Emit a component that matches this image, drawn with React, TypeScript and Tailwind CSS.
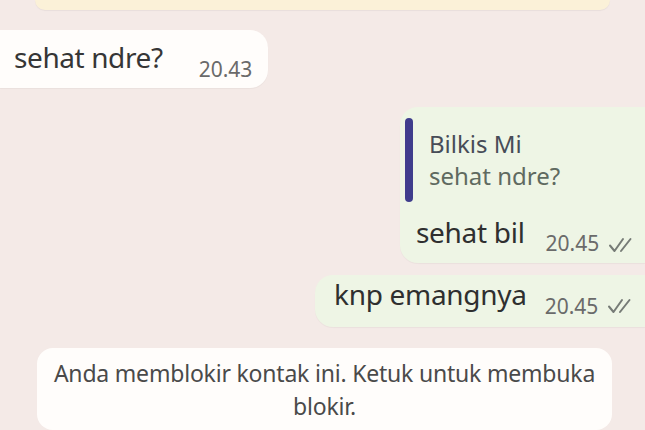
import React from "react";

const Ticks = () => (
  <svg width="29" height="16" viewBox="0 0 29 16" fill="none" stroke="#767b76" strokeWidth="2" strokeLinecap="round" strokeLinejoin="round">
    <path d="M2 8.5 L6.5 14 L15 2" />
    <path d="M13 14 L22.5 2" />
  </svg>
);

export default function App() {
  return (
    <div
      className="w-[645px] h-[430px] bg-[#f4eae7] overflow-hidden flex flex-col text-[#3b3b3b]"
      style={{ fontFamily: '"Noto Sans", "Open Sans", sans-serif' }}
    >
      <div className="ml-[35px] w-[575px] h-[10px] bg-[#fbf1d8] rounded-b-[14px] shrink-0 shadow-[0_1px_1px_rgba(0,0,0,0.05)]" />

      <div className="mt-[20px] w-[268px] h-[58px] bg-[#fffdfb] rounded-r-[18px] flex items-start shrink-0 shadow-[0_1px_1px_rgba(0,0,0,0.04)]">
        <span className="mt-[13px] ml-[14px] text-[28px] leading-none tracking-[-0.4px] text-[#363636]">sehat ndre?</span>
        <span className="mt-[29px] ml-[36px] text-[21px] leading-none text-[#6a6a6a]">20.43</span>
      </div>

      <div className="mt-[19px] self-end w-[245px] h-[156px] bg-[#eef5e5] rounded-l-[18px] shrink-0 flex flex-col shadow-[0_1px_1px_rgba(0,0,0,0.04)]">
        <div className="mt-[11px] ml-[5px] h-[84px] flex">
          <div className="w-[8px] h-full bg-[#3f3d8c] rounded-[4px]" />
          <div className="ml-[16px] flex flex-col pt-[14px]">
            <span className="text-[24px] leading-none text-[#474c57]">Bilkis Mi</span>
            <span className="mt-[8px] text-[24px] leading-none text-[#5f6a60]">sehat ndre?</span>
          </div>
        </div>
        <div className="flex items-start ml-[16px]">
          <span className="mt-[16px] text-[28px] leading-none text-[#2f2f2f] tracking-[-0.3px]">sehat bil</span>
          <span className="mt-[31px] ml-[21px] text-[21px] leading-none text-[#6a6a6a]">20.45</span>
          <span className="mt-[35px] ml-[9px]"><Ticks /></span>
        </div>
      </div>

      <div className="mt-[12px] self-end w-[330px] h-[52px] bg-[#eef5e5] rounded-l-[18px] shrink-0 flex items-start shadow-[0_1px_1px_rgba(0,0,0,0.04)]">
        <span className="mt-[5px] ml-[19px] text-[28px] leading-none text-[#2f2f2f] tracking-[-0.3px]">knp emangnya</span>
        <span className="mt-[21px] ml-[18px] text-[21px] leading-none text-[#6a6a6a]">20.45</span>
        <span className="mt-[23px] ml-[9px]"><Ticks /></span>
      </div>

      <div className="mt-[21px] ml-[37px] w-[575px] h-[82px] bg-[#fffdfb] rounded-[16px] shrink-0 flex flex-col items-center pt-[9px] text-[23px] leading-[33px] text-[#4a4a4a] tracking-[-0.2px]">
        <span>Anda memblokir kontak ini. Ketuk untuk membuka</span>
        <span>blokir.</span>
      </div>
    </div>
  );
}
